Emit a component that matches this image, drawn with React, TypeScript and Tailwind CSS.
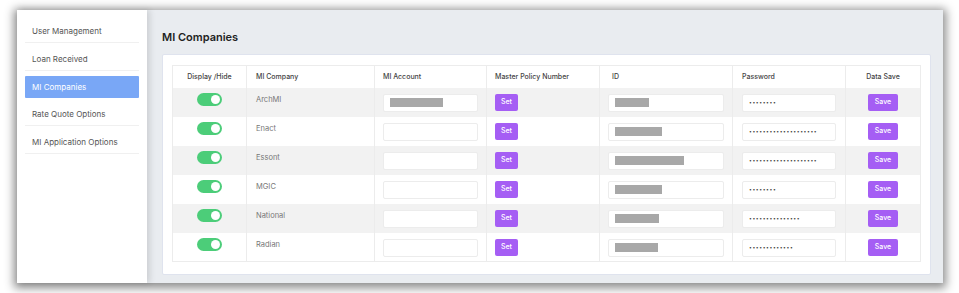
import React from "react";

const menu = [
    { label: "User Management" },
    { label: "Loan Received" },
    { label: "MI Companies", active: true },
    { label: "Rate Quote Options" },
    { label: "MI Application Options" },
];

const rows = [
    { name: "ArchMI", account: 53, id: 34, pass: 8 },
    { name: "Enact", account: 0, id: 47, pass: 20 },
    { name: "Essont", account: 0, id: 69, pass: 20 },
    { name: "MGIC", account: 0, id: 47, pass: 8 },
    { name: "National", account: 0, id: 44, pass: 15 },
    { name: "Radian", account: 0, id: 43, pass: 13 },
];

function Toggle() {
    return (
        <div className="mx-auto flex h-[13px] w-[25px] items-center justify-end rounded-full bg-[#4ccd79] pr-[2px]">
            <div className="h-[9px] w-[9px] rounded-full bg-white" />
        </div>
    );
}

function Field({ redact, dots }: { redact?: number; dots?: number }) {
    return (
        <div className="flex h-[18px] w-full items-center rounded-[2px] border border-[#ececec] bg-white pl-[6px]">
            {redact ? <div className="h-[9px] bg-[#a8a8a8]" style={{ width: redact }} /> : null}
            {dots ? (
                <span className="text-[5px] leading-none tracking-[0.6px] text-[#444]">
                    {"•".repeat(dots)}
                </span>
            ) : null}
        </div>
    );
}

function Btn({ label, w }: { label: string; w: string }) {
    return (
        <button className={`flex h-[17px] ${w} items-center justify-center rounded-[2px] bg-[#a55ef4] text-[7px] font-medium text-white`}>
            {label}
        </button>
    );
}

export default function App() {
    return (
        <div className="h-[293px] w-[959px] bg-white pl-[17px] pt-[10px] font-['Inter',sans-serif]">
            <div className="flex h-[273px] w-[926px] shadow-[0_2px_9px_3px_rgba(0,0,0,0.45)]">
                {/* SIDEBAR */}
                <div className="relative z-10 w-[131px] bg-white px-[8px] pt-[5px] shadow-[3px_0_6px_rgba(0,0,0,0.12)]">
                    {menu.map((m, i) => (
                        <div
                            key={i}
                            className={`mt-[5px] flex h-[22.75px] items-center pl-[7px] text-[8px] ${
                                m.active
                                    ? "rounded-[1px] bg-[#79a7f6] text-white"
                                    : "border-b border-[#f0f0f0] text-[#555]"
                            }`}
                        >
                            {m.label}
                        </div>
                    ))}
                </div>

                {/* MAIN */}
                <div className="flex-1 bg-[#e9ecf0] pl-[15px] pr-[12px] pt-[20px]">
                    <h1 className="h-[14px] text-[11px] font-semibold leading-[14px] text-[#222]">MI Companies</h1>

                    <div className="mt-[10px] rounded-[2px] border border-[#dfe3ee] bg-white px-[9px] pb-[12px] pt-[10px]">
                        <table className="w-[748px] table-fixed border-collapse border border-[#ececec] text-[7px]">
                            <colgroup>
                                <col className="w-[74px]" />
                                <col className="w-[128px]" />
                                <col className="w-[112px]" />
                                <col className="w-[113px]" />
                                <col className="w-[133px]" />
                                <col className="w-[113px]" />
                                <col className="w-[75px]" />
                            </colgroup>
                            <thead>
                                <tr className="h-[22px] text-[#444]">
                                    <th className="border-r border-[#ececec] text-center font-medium">Display /Hide</th>
                                    <th className="border-r border-[#ececec] pl-[9px] text-left font-medium">MI Company</th>
                                    <th className="border-r border-[#ececec] pl-[8px] text-left font-medium">MI Account</th>
                                    <th className="border-r border-[#ececec] pl-[8px] text-left font-medium">Master Policy Number</th>
                                    <th className="border-r border-[#ececec] pl-[12px] text-left font-medium">ID</th>
                                    <th className="border-r border-[#ececec] pl-[9px] text-left font-medium">Password</th>
                                    <th className="text-center font-medium">Data Save</th>
                                </tr>
                            </thead>
                            <tbody>
                                {rows.map((r, i) => (
                                    <tr key={r.name} className={`h-[29px] ${i % 2 === 0 ? "bg-[#f2f2f2]" : "bg-white"}`}>
                                        <td className="border-r border-[#ececec] pt-[5px] align-top">
                                            <Toggle />
                                        </td>
                                        <td className="border-r border-[#ececec] pl-[9px] pt-[6px] align-top text-[7.5px] text-[#777]">
                                            {r.name}
                                        </td>
                                        <td className="border-r border-[#ececec] px-[8px] pt-[6px] align-top">
                                            <Field redact={r.account} />
                                        </td>
                                        <td className="border-r border-[#ececec] pl-[8px] pt-[6px] align-top">
                                            <Btn label="Set" w="w-[23px]" />
                                        </td>
                                        <td className="border-r border-[#ececec] pl-[8px] pr-[8px] pt-[6px] align-top">
                                            <Field redact={r.id} />
                                        </td>
                                        <td className="border-r border-[#ececec] px-[9px] pt-[6px] align-top">
                                            <Field dots={r.pass} />
                                        </td>
                                        <td className="pt-[6px] align-top">
                                            <div className="flex justify-center">
                                                <Btn label="Save" w="w-[30px]" />
                                            </div>
                                        </td>
                                    </tr>
                                ))}
                            </tbody>
                        </table>
                    </div>
                </div>
            </div>
        </div>
    );
}
